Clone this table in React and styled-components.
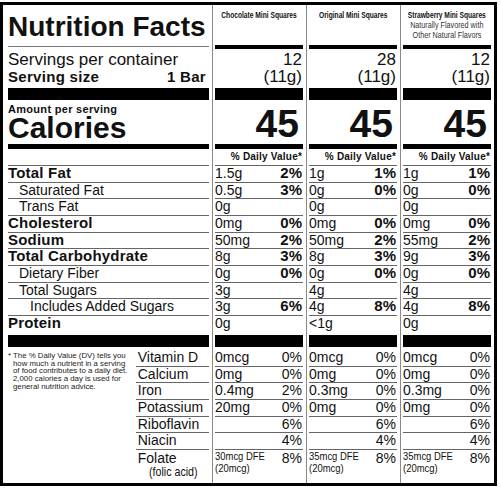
import React from 'react';
import styled, { createGlobalStyle } from 'styled-components';

const GlobalStyle = createGlobalStyle`
  html, body { margin: 0; padding: 0; background: #fff; }
  body { font-family: "Liberation Sans", Arial, Helvetica, sans-serif; color: #111; }
  * { box-sizing: border-box; }
`;

const Frame = styled.div`
  display: flex;
  width: 497px;
  height: 484px;
  margin-top: 2px;
  border: 3px solid #000;
  padding: 0 3px 0 5px;
  overflow: hidden;
`;

const LabelPanel = styled.div`
  width: 201px;
  display: flex;
  flex-direction: column;
  & > * { flex-shrink: 0; }
`;

const ProductColumn = styled.div`
  width: 91px;
  margin-left: 3px;
  border-left: 1px solid #8a8a8a;
  padding-left: 2px;
  display: flex;
  flex-direction: column;
  & > * { flex-shrink: 0; }
`;

// condensed type: the label's narrow face, squeezed from Liberation Sans
const Squeeze = styled.span`
  display: inline-block;
  white-space: nowrap;
  transform: scaleX(${p => p.$sx});
  transform-origin: ${p => p.$origin || 'left'} center;
`;

const Title = styled.h1`
  margin: 0 0 2px;
  height: 42px;
  padding-top: 7px;
  border-bottom: 1px solid #777;
  font-size: 28px;
  line-height: 30px;
  font-weight: 900;
  white-space: nowrap;
`;

const ColHead = styled.div`
  height: 40px;
  padding-top: 5px;
  display: flex;
  flex-direction: column;
  align-items: center;
`;

const ProductName = styled.div`
  font-weight: 700;
  font-size: 9px;
  line-height: 10px;
`;

const ProductNote = styled.div`
  font-size: 9px;
  line-height: 9.7px;
  margin-top: ${p => (p.$first ? 1 : 0)}px;
  color: #333;
`;

const Bar = styled.div`
  height: ${p => p.$h}px;
  background: #000;
`;

const Servings = styled.div`
  height: 39px;
  padding-top: 2px;
`;

const ServLine = styled.div`
  display: flex;
  justify-content: ${p => (p.$right ? 'flex-end' : 'space-between')};
  height: 17px;
  line-height: 17px;
  font-size: ${p => p.$size || 17}px;
  font-weight: ${p => (p.$bold ? 700 : 400)};
  letter-spacing: ${p => (p.$bold ? '0.3px' : '0')};
  padding-right: ${p => (p.$right ? 1 : 3)}px;
  white-space: nowrap;
`;

const Calories = styled.div`
  height: 44px;
  padding-top: 3px;
`;

const Amount = styled.div`
  font-size: 11px;
  line-height: 12px;
  font-weight: 700;
  letter-spacing: 0.3px;
`;

const CaloriesWord = styled.div`
  font-size: 30px;
  line-height: 26px;
  font-weight: 700;
`;

const CalorieCount = styled.div`
  height: 44px;
  padding: 4px 4px 0 0;
  text-align: right;
  font-size: 39px;
  line-height: 40px;
  font-weight: 700;
`;

const DVRow = styled.div`
  height: 17px;
  padding: 2px 1px 0 0;
  border-bottom: 1px solid #666;
  text-align: right;
  font-size: 10px;
  line-height: 12px;
  font-weight: 700;
  letter-spacing: 0.2px;
  white-space: nowrap;
`;

const NutRow = styled.div`
  display: flex;
  justify-content: space-between;
  flex-shrink: 0;
  height: ${p => (p.$last ? '19px' : 'calc(50px / 3)')};
  border-bottom: ${p => (p.$last ? 'none' : '1px solid #666')};
  padding-left: ${p => (p.$indent || 0) * 11 + (p.$pad || 0)}px;
  padding-right: 1px;
  line-height: 14px;
  font-size: ${p => (p.$bold ? 15 : 14)}px;
  font-weight: ${p => (p.$bold ? 700 : 400)};
  letter-spacing: ${p => (p.$bold ? '0.2px' : '0')};
  white-space: nowrap;
`;

const Pct = styled.span`
  font-size: ${p => (p.$bold ? 15 : 14)}px;
  font-weight: ${p => (p.$bold ? 700 : 400)};
`;

const VitaminArea = styled.div`
  flex: 1;
  min-height: 0;
  display: flex;
  padding-top: 3px;
`;

const Footnote = styled.div`
  width: 131px;
  padding: 2px 0 0 5px;
  text-indent: -5px;
  font-size: 7.8px;
  line-height: 7.75px;
  color: #222;
  white-space: nowrap;
`;

const VitList = styled.div`
  flex: 1;
  display: flex;
  flex-direction: column;
  & > * { flex-shrink: 0; }
`;

const FolateRow = styled.div`
  flex: 1;
  display: flex;
  justify-content: space-between;
  padding: ${p => p.$pt || 0}px 1px 0 ${p => p.$pl || 0}px;
`;

const FolateLabel = styled.div`
  font-size: 14px;
  line-height: 14px;
`;

const FolicAcid = styled.div`
  margin-left: 11px;
  font-size: 13px;
  line-height: 14px;
`;

const FolateAmount = styled.div`
  font-size: 10.5px;
  line-height: 12.5px;
`;

const nutrients = [
  { name: 'Total Fat', bold: true },
  { name: 'Saturated Fat', indent: 1 },
  { name: 'Trans Fat', indent: 1 },
  { name: 'Cholesterol', bold: true },
  { name: 'Sodium', bold: true },
  { name: 'Total Carbohydrate', bold: true },
  { name: 'Dietary Fiber', indent: 1 },
  { name: 'Total Sugars', indent: 1 },
  { name: 'Includes Added Sugars', indent: 2 },
  { name: 'Protein', bold: true },
];

const vitamins = ['Vitamin D', 'Calcium', 'Iron', 'Potassium', 'Riboflavin', 'Niacin'];

const products = [
  {
    name: 'Chocolate Mini Squares',
    servings: '12',
    values: [['1.5g', '2%'], ['0.5g', '3%'], ['0g', ''], ['0mg', '0%'], ['50mg', '2%'], ['8g', '3%'], ['0g', '0%'], ['3g', ''], ['3g', '6%'], ['0g', '']],
    vits: [['0mcg', '0%'], ['0mg', '0%'], ['0.4mg', '2%'], ['20mg', '0%'], ['', '6%'], ['', '4%']],
    folate: '30mcg DFE',
  },
  {
    name: 'Original Mini Squares',
    servings: '28',
    values: [['1g', '1%'], ['0g', '0%'], ['0g', ''], ['0mg', '0%'], ['50mg', '2%'], ['8g', '3%'], ['0g', '0%'], ['4g', ''], ['4g', '8%'], ['<1g', '']],
    vits: [['0mcg', '0%'], ['0mg', '0%'], ['0.3mg', '0%'], ['0mg', '0%'], ['', '6%'], ['', '4%']],
    folate: '35mcg DFE',
  },
  {
    name: 'Strawberry Mini Squares',
    note: ['Naturally Flavored with', 'Other Natural Flavors'],
    servings: '12',
    values: [['1g', '1%'], ['0g', '0%'], ['0g', ''], ['0mg', '0%'], ['55mg', '2%'], ['9g', '3%'], ['0g', '0%'], ['4g', ''], ['4g', '8%'], ['0g', '']],
    vits: [['0mcg', '0%'], ['0mg', '0%'], ['0.3mg', '0%'], ['0mg', '0%'], ['', '6%'], ['', '4%']],
    folate: '35mcg DFE',
  },
];

function Product({ p }) {
  return (
    <ProductColumn>
      <ColHead>
        <ProductName><Squeeze $sx={0.74} $origin="center">{p.name}</Squeeze></ProductName>
        {p.note && p.note.map((n, i) => (
          <ProductNote key={n} $first={i === 0}><Squeeze $sx={0.8} $origin="center">{n}</Squeeze></ProductNote>
        ))}
      </ColHead>
      <Bar $h={4} />
      <Servings>
        <ServLine $right>{p.servings}</ServLine>
        <ServLine $right>(11g)</ServLine>
      </Servings>
      <Bar $h={12} />
      <CalorieCount>45</CalorieCount>
      <Bar $h={5} />
      <DVRow>% Daily Value*</DVRow>
      {p.values.map(([amt, pct], i) => (
        <NutRow key={i} $last={i === p.values.length - 1}>
          <span>{amt}</span>
          <Pct $bold>{pct}</Pct>
        </NutRow>
      ))}
      <Bar $h={12} />
      <VitaminArea>
        <VitList>
          {p.vits.map(([amt, pct], i) => (
            <NutRow key={i}>
              <span>{amt}</span>
              <Pct>{pct}</Pct>
            </NutRow>
          ))}
          <FolateRow>
            <FolateAmount>
              <Squeeze $sx={0.9}>{p.folate}</Squeeze><br />
              <Squeeze $sx={0.9}>(20mcg)</Squeeze>
            </FolateAmount>
            <Pct>8%</Pct>
          </FolateRow>
        </VitList>
      </VitaminArea>
    </ProductColumn>
  );
}

export default function App() {
  return (
    <>
      <GlobalStyle />
      <Frame>
        <LabelPanel>
          <Title>Nutrition Facts</Title>
          <Servings>
            <ServLine>Servings per container</ServLine>
            <ServLine $bold $size={15}><span>Serving size</span><span>1 Bar</span></ServLine>
          </Servings>
          <Bar $h={12} />
          <Calories>
            <Amount>Amount per serving</Amount>
            <CaloriesWord>Calories</CaloriesWord>
          </Calories>
          <Bar $h={5} />
          <DVRow />
          {nutrients.map((n, i) => (
            <NutRow key={n.name} $bold={n.bold} $indent={n.indent} $last={i === nutrients.length - 1}>
              {n.name}
            </NutRow>
          ))}
          <Bar $h={12} />
          <VitaminArea>
            <Footnote>
              * The % Daily Value (DV) tells you<br />
              how much a nutrient in a serving<br />
              of food contributes to a daily diet.<br />
              2,000 calories a day is used for<br />
              general nutrition advice.
            </Footnote>
            <VitList>
              {vitamins.map(v => (
                <NutRow key={v} $pad={2}>{v}</NutRow>
              ))}
              <FolateRow $pt={1} $pl={2}>
                <div>
                  <FolateLabel>Folate</FolateLabel>
                  <FolicAcid><Squeeze $sx={0.82}>(folic acid)</Squeeze></FolicAcid>
                </div>
              </FolateRow>
            </VitList>
          </VitaminArea>
        </LabelPanel>
        {products.map(p => <Product key={p.name} p={p} />)}
      </Frame>
    </>
  );
}
